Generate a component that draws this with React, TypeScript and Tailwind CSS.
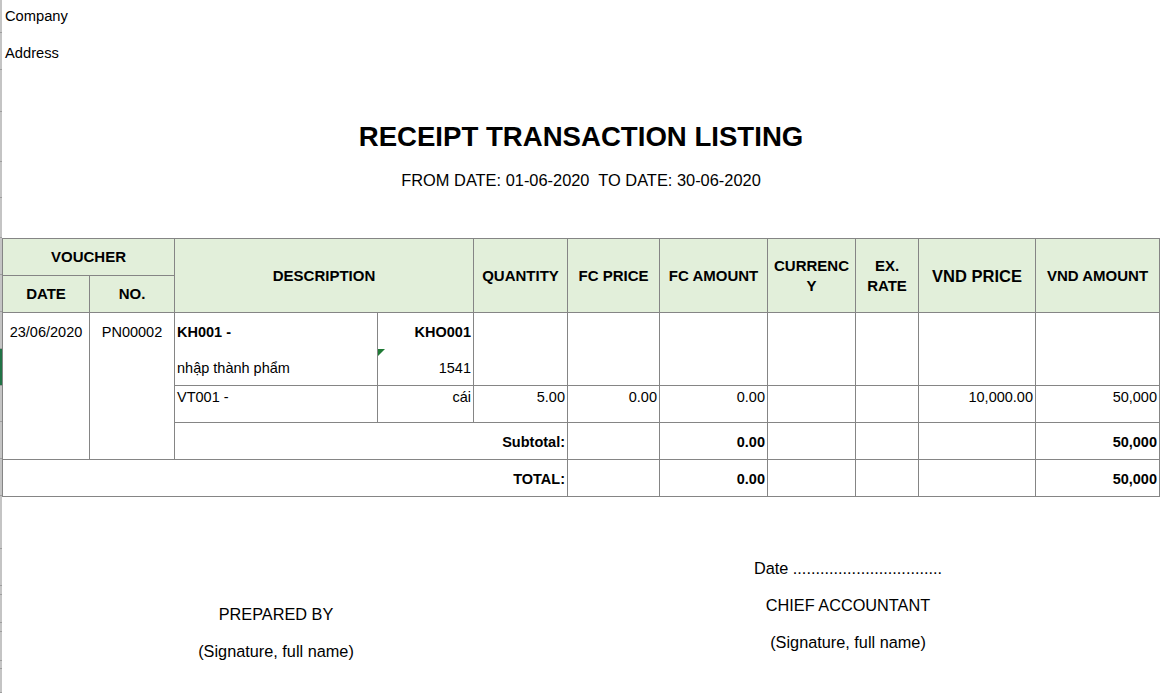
import clsx from "clsx";
import type { ReactNode } from "react";

const gutter = [
  { h: 33 }, { h: 37 }, { h: 42 }, { h: 50 }, { h: 36 }, { h: 40 },
  { h: 37 }, { h: 37 }, { h: 37 }, { h: 37, active: true }, { h: 36 },
  { h: 37 }, { h: 37 }, { h: 53 }, { h: 37 }, { h: 9 }, { h: 28 },
  { h: 9 }, { h: 29 }, { h: 8 }, { h: 24 },
];

const Head = ({ className, children }: { className?: string; children: ReactNode }) => (
  <div
    className={clsx(
      "flex items-center justify-center bg-[#e2efda] text-center text-[15px] font-bold leading-[20px] text-black",
      className
    )}
  >
    {children}
  </div>
);

const Cell = ({ className, children }: { className?: string; children?: ReactNode }) => (
  <div className={clsx("bg-white text-[14.5px] leading-[20px] text-black", className)}>{children}</div>
);

const App = () => {
  return (
    <div className="flex h-[693px] w-[1175px] overflow-hidden bg-white font-['Liberation_Sans',Arial,sans-serif] text-black">
      {/* row header edge */}
      <div className="flex w-[2px] flex-col">
        {gutter.map((g, i) => (
          <div
            key={i}
            style={{ height: g.h }}
            className={clsx(
              "border-b border-[#9e9e9e]",
              g.active ? "bg-[#217346]" : "bg-[#c4c4c4]"
            )}
          />
        ))}
      </div>

      <div className="flex flex-col">
        <div className="flex h-[33px] items-center pl-[3px] text-[14.7px]">Company</div>
        <div className="flex h-[37px] items-center pl-[3px] pt-[3px] text-[14.7px]">Address</div>
        <div className="h-[42px]" />
        <div className="flex h-[50px] w-[1158px] items-center justify-center text-[27.6px] font-bold">
          RECEIPT TRANSACTION LISTING
        </div>
        <div className="flex h-[36px] w-[1158px] items-center justify-center whitespace-pre pt-[1px] text-[16.4px]">
          FROM DATE: 01-06-2020  TO DATE: 30-06-2020
        </div>
        <div className="h-[40px]" />

        <div className="grid w-[1158px] grid-cols-[86px_84px_202px_95px_93px_91px_107px_87px_62px_116px_123px] grid-rows-[36px_36px_72px_36px_36px_36px] gap-px border border-[#858585] bg-[#858585]">
          <Head className="col-span-2 col-start-1 row-start-1">VOUCHER</Head>
          <Head className="col-start-1 row-start-2">DATE</Head>
          <Head className="col-start-2 row-start-2">NO.</Head>
          <Head className="col-span-2 col-start-3 row-span-2 row-start-1">DESCRIPTION</Head>
          <Head className="col-start-5 row-span-2 row-start-1">QUANTITY</Head>
          <Head className="col-start-6 row-span-2 row-start-1">FC PRICE</Head>
          <Head className="col-start-7 row-span-2 row-start-1">FC AMOUNT</Head>
          <Head className="col-start-8 row-span-2 row-start-1">
            CURRENC
            <br />Y
          </Head>
          <Head className="col-start-9 row-span-2 row-start-1">
            EX.
            <br />
            RATE
          </Head>
          <Head className="col-start-10 row-span-2 row-start-1 text-[16.5px]">VND PRICE</Head>
          <Head className="col-start-11 row-span-2 row-start-1">VND AMOUNT</Head>

          {/* voucher */}
          <Cell className="col-start-1 row-span-3 row-start-3">
            <div className="flex h-[36px] items-center justify-center pt-[1px]">23/06/2020</div>
          </Cell>
          <Cell className="col-start-2 row-span-3 row-start-3">
            <div className="flex h-[36px] items-center justify-center pt-[1px]">PN00002</div>
          </Cell>
          <Cell className="col-start-3 row-start-3 pl-[2px]">
            <div className="flex h-[36px] items-center pt-[1px] font-bold">KH001 -</div>
            <div className="flex h-[36px] items-center pt-[1px]">nhập thành phẩm</div>
          </Cell>
          <Cell className="relative col-start-4 row-start-3 pr-[2px] text-right">
            <div className="flex h-[36px] items-center justify-end pt-[1px] font-bold">KHO001</div>
            <div className="flex h-[36px] items-center justify-end pt-[1px]">1541</div>
            <div className="absolute left-0 top-[36px] h-0 w-0 border-r-[7px] border-t-[7px] border-r-transparent border-t-[#1f7a35]" />
          </Cell>
          <Cell className="col-start-5 row-start-3" />
          <Cell className="col-start-6 row-start-3" />
          <Cell className="col-start-7 row-start-3" />
          <Cell className="col-start-8 row-start-3" />
          <Cell className="col-start-9 row-start-3" />
          <Cell className="col-start-10 row-start-3" />
          <Cell className="col-start-11 row-start-3" />

          {/* item line */}
          <Cell className="col-start-3 row-start-4 pl-[2px] pt-[1px]">VT001 -</Cell>
          <Cell className="col-start-4 row-start-4 pr-[2px] pt-[1px] text-right">cái</Cell>
          <Cell className="col-start-5 row-start-4 pr-[2px] pt-[1px] text-right">5.00</Cell>
          <Cell className="col-start-6 row-start-4 pr-[2px] pt-[1px] text-right">0.00</Cell>
          <Cell className="col-start-7 row-start-4 pr-[2px] pt-[1px] text-right">0.00</Cell>
          <Cell className="col-start-8 row-start-4" />
          <Cell className="col-start-9 row-start-4" />
          <Cell className="col-start-10 row-start-4 pr-[2px] pt-[1px] text-right">10,000.00</Cell>
          <Cell className="col-start-11 row-start-4 pr-[2px] pt-[1px] text-right">50,000</Cell>

          {/* subtotal */}
          <Cell className="col-span-3 col-start-3 row-start-5 flex items-center justify-end pr-[2px] pt-[1px] font-bold">
            Subtotal:
          </Cell>
          <Cell className="col-start-6 row-start-5" />
          <Cell className="col-start-7 row-start-5 flex items-center justify-end pr-[2px] pt-[1px] font-bold">0.00</Cell>
          <Cell className="col-start-8 row-start-5" />
          <Cell className="col-start-9 row-start-5" />
          <Cell className="col-start-10 row-start-5" />
          <Cell className="col-start-11 row-start-5 flex items-center justify-end pr-[2px] pt-[1px] font-bold">50,000</Cell>

          {/* total */}
          <Cell className="col-span-5 col-start-1 row-start-6 flex items-center justify-end pr-[2px] pt-[1px] font-bold">
            TOTAL:
          </Cell>
          <Cell className="col-start-6 row-start-6" />
          <Cell className="col-start-7 row-start-6 flex items-center justify-end pr-[2px] pt-[1px] font-bold">0.00</Cell>
          <Cell className="col-start-8 row-start-6" />
          <Cell className="col-start-9 row-start-6" />
          <Cell className="col-start-10 row-start-6" />
          <Cell className="col-start-11 row-start-6 flex items-center justify-end pr-[2px] pt-[1px] font-bold">50,000</Cell>
        </div>

        <div className="flex text-[16.3px]">
          <div className="flex w-[548px] flex-col pt-[99px]">
            <div className="flex h-[37px] items-center justify-center">PREPARED BY</div>
            <div className="flex h-[37px] items-center justify-center">(Signature, full name)</div>
          </div>
          <div className="ml-[110px] flex w-[376px] flex-col pt-[53px]">
            <div className="flex h-[37px] items-center justify-center">
              Date .................................
            </div>
            <div className="flex h-[37px] items-center justify-center">CHIEF ACCOUNTANT</div>
            <div className="flex h-[37px] items-center justify-center">(Signature, full name)</div>
          </div>
        </div>
      </div>
    </div>
  );
};

export default App;
